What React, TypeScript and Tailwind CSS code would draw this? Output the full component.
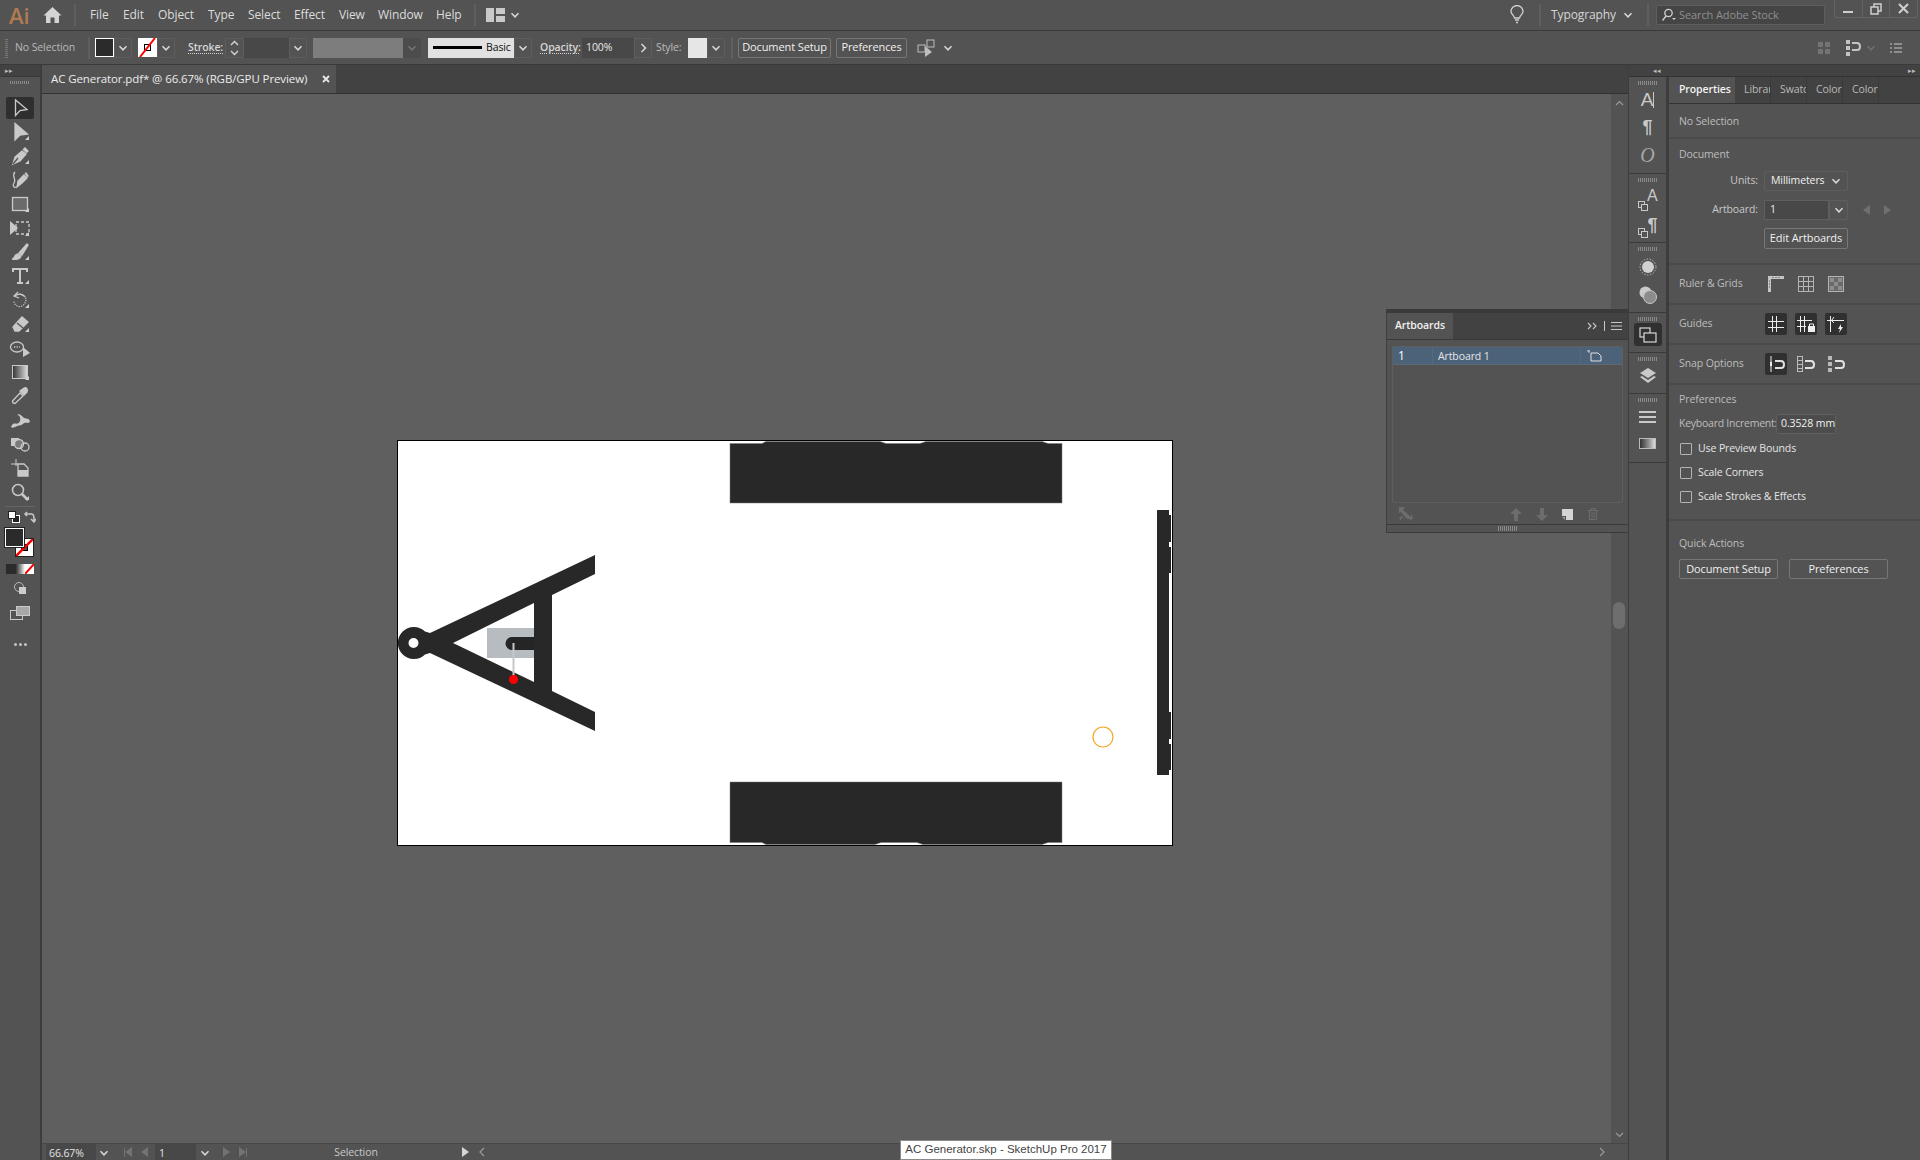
import React from "react";

const Chev = ({ c = "#d8d8d8", s = 10 }: { c?: string; s?: number }) => (
  <svg width={s} height={s} viewBox="0 0 10 10" fill="none"><path d="M1.5 3.2 5 6.8 8.5 3.2" stroke={c} strokeWidth="1.5" /></svg>
);

const Ico = ({ children, w = 20, h = 20, vb }: { children: React.ReactNode; w?: number; h?: number; vb?: string }) => (
  <svg width={w} height={h} viewBox={vb || `0 0 ${w} ${h}`} fill="none" stroke="#c9c9c9" strokeWidth="1.3">{children}</svg>
);

const Corner = () => (
  <svg className="absolute right-[5px] bottom-[3px]" width="4" height="4" viewBox="0 0 4 4"><path d="M4 0V4H0Z" fill="#cfcfcf" /></svg>
);

const tools: { icon: React.ReactNode; corner?: boolean; active?: boolean }[] = [
  { active: true, icon: <Ico><path d="M5.5 2V17.5L10 12.5 17 11.5Z" /></Ico> },
  { corner: true, icon: <Ico><path d="M5 1.5V18L10 13 17.5 12Z" fill="#c9c9c9" /></Ico> },
  { corner: true, icon: <Ico><path d="M3 18 5 11 12 5 16 8 10 15Z" fill="#c9c9c9" /><path d="M13 4 15 2 18 5 16 7" fill="#c9c9c9" /><path d="M3 18 8 12" stroke="#535353" /></Ico> },
  { icon: <Ico><path d="M7 17 8 11 14 5 17 8 12 13Z" fill="#c9c9c9" /><path d="M15 4 16 3 18 6 17 7" fill="#c9c9c9" /><path d="M5 2C1 6 7 9 4 13 2 16 4 18 7 17" /></Ico> },
  { corner: true, icon: <Ico><rect x="2.5" y="3.5" width="15" height="13" fill="#6b6b6b" /></Ico> },
  { corner: true, icon: <Ico w={22} vb="0 0 22 20"><rect x="7" y="4" width="13" height="12" strokeDasharray="3 2" /><path d="M1 3V17L9 10Z" fill="#c9c9c9" stroke="none" /></Ico> },
  { corner: true, icon: <Ico><path d="M9 11 17 2 18 3 12 13Z" fill="#c9c9c9" /><path d="M2 17C5 17 4 12 8 12L11 14C10 17 7 18 2 17Z" fill="#c9c9c9" /></Ico> },
  { corner: true, icon: <Ico><path d="M3 6V3H17V6M10 3V17M7 17H13" strokeWidth="2" /></Ico> },
  { corner: true, icon: <Ico><path d="M5 6C8 3 15 4 16 9 16 13 13 17 9 16.5 6 16 4 14 4 11" strokeDasharray="1.2 1.2" /><path d="M5 6C8 3 13 4 15 7" /><path d="M8 2 4 6 9 8" /></Ico> },
  { corner: true, icon: <Ico><path d="M3 13 12 3 18 8 9 17 5 17Z" fill="#c9c9c9" /><path d="M7 9 13 14" stroke="#535353" /></Ico> },
  { icon: <Ico w={22} vb="0 0 22 20"><ellipse cx="8" cy="9" rx="6.5" ry="5" /><path d="M14 9V19L21 15Z" fill="#c9c9c9" stroke="none" /><path d="M5 9H11" strokeDasharray="1.3 1.3" /></Ico> },
  { corner: true, icon: <svg width="16" height="14" viewBox="0 0 16 14"><defs><linearGradient id="gt"><stop offset="0" stopColor="#333" /><stop offset="1" stopColor="#ddd" /></linearGradient></defs><rect x="0.5" y="0.5" width="15" height="13" fill="url(#gt)" stroke="#c9c9c9" /></svg> },
  { icon: <Ico><path d="M3 17 2.5 15 10 7 13 10 5 17.5Z" /><path d="M10 5 14 2C17 1 18 4 17 6L14 9Z" fill="#c9c9c9" /></Ico> },
  { icon: <Ico w={22} vb="0 0 22 20"><path d="M2 17C5 10 8 17 11 11 12 7 10 5 8 5L10 4 13 6C16 10 19 7 21 11 20 15 17 11 14 14 12 16 9 15 6 17 4 18 3 18 2 17Z" fill="#c9c9c9" stroke="none" /></Ico> },
  { icon: <Ico w={22} vb="0 0 22 20"><rect x="2" y="4" width="8" height="8" fill="#c9c9c9" stroke="none" /><circle cx="10" cy="10" r="4.5" fill="#7a7a7a" /><circle cx="16" cy="13" r="4" /></Ico> },
  { icon: <Ico><path d="M1 6H8M6 1V8" strokeWidth="1" /><path d="M8 6H14L18 10V18H8Z" /><path d="M8 12H18V18H8Z" fill="#c9c9c9" stroke="none" /></Ico> },
  { corner: true, icon: <Ico><circle cx="8" cy="8" r="5.5" strokeWidth="1.5" /><path d="M12 12 18 18" strokeWidth="2.5" /></Ico> },
];

const Tools = () => (
  <aside className="w-[40px] flex flex-col bg-[#535353] shrink-0 items-center">
    <div className="w-full h-[12px] bg-[#424242] border-b border-[#3a3a3a] flex items-center pl-[5px]">
      <span className="text-[7px] leading-none text-[#bbb]">▸▸</span>
    </div>
    <div className="w-[20px] h-[3px] mt-[4px] mb-[12px] bg-[repeating-linear-gradient(90deg,#8a8a8a_0_1px,transparent_1px_2px)]" />
    {tools.map((t, i) => (
      <div key={i} className={`relative w-[28px] h-[22px] my-[1px] flex items-center justify-center rounded-[2px] ${t.active ? "bg-[#2f2f2f]" : ""}`}>
        {t.icon}
        {t.corner && <Corner />}
      </div>
    ))}
    <div className="w-[30px] h-px bg-[#656565] mt-[2px]" />
    <div className="w-[32px] flex justify-between items-center mt-[3px] h-[13px] pl-[4px]">
      <svg width="12" height="12" viewBox="0 0 12 12"><rect x="4.5" y="4.5" width="7" height="7" fill="#222" stroke="#fff" /><rect x="0.5" y="0.5" width="7" height="7" fill="#fff" stroke="#222" /></svg>
      <svg width="12" height="12" viewBox="0 0 12 12" fill="none" stroke="#c9c9c9" strokeWidth="1.5"><path d="M1 3H8C10 3 10 6 10 10M7 8 10 11 12 8M3 1 1 3 3 5" /></svg>
    </div>
    <div className="relative w-[30px] h-[29px] mt-[5px]">
      <div className="absolute left-[10px] top-[10px] w-[19px] h-[19px] border border-[#222] overflow-hidden bg-white">
        <div className="absolute inset-[5px] bg-[#555] border border-black" />
        <svg className="absolute inset-0" width="17" height="17" viewBox="0 0 17 17"><path d="M0 17 17 0" stroke="#f00" strokeWidth="2.5" /></svg>
      </div>
      <div className="absolute left-0 top-0 w-[19px] h-[19px] bg-[#2b2b2b] border border-white outline outline-[#222]" />
    </div>
    <div className="flex w-[28px] h-[10px] mt-[7px]">
      <div className="flex-1 bg-[#2b2b2b]" />
      <div className="flex-1 bg-gradient-to-r from-[#222] to-white" />
      <div className="flex-1 bg-white overflow-hidden"><svg width="9" height="10" viewBox="0 0 9 10"><path d="M0 10 9 0" stroke="#f00" strokeWidth="2" /></svg></div>
    </div>
    <div className="mt-[6px] h-[16px] flex items-center">
      <svg width="14" height="14" viewBox="0 0 14 14" fill="none"><circle cx="6" cy="6" r="4.5" stroke="#bbb" /><rect x="6" y="6" width="7" height="7" fill="#ccc" /></svg>
    </div>
    <div className="mt-[10px]">
      <svg width="20" height="14" viewBox="0 0 20 14" fill="none" stroke="#c9c9c9"><rect x="0.5" y="4.5" width="12" height="9" /><rect x="6.5" y="0.5" width="13" height="9" fill="#a8a8a8" /></svg>
    </div>
    <div className="mt-[23px] flex gap-[2px]">
      <span className="w-[3px] h-[3px] rounded-full bg-[#c4c4c4]" /><span className="w-[3px] h-[3px] rounded-full bg-[#c4c4c4]" /><span className="w-[3px] h-[3px] rounded-full bg-[#c4c4c4]" />
    </div>
  </aside>
);

const menus: [string, string][] = [["File", "w-[33px]"], ["Edit", "w-[35px]"], ["Object", "w-[50px]"], ["Type", "w-[40px]"], ["Select", "w-[46px]"], ["Effect", "w-[45px]"], ["View", "w-[39px]"], ["Window", "w-[58px]"], ["Help", "w-[37px]"]];

const VSep = ({ h = "h-[22px]", c = "bg-[#5f5f5f]" }: { h?: string; c?: string }) => <div className={`w-[2px] ${h} ${c} shrink-0`} />;

const MenuBar = () => (
  <header className="h-[31px] bg-[#535353] border-b border-[#3a3a3a] flex items-center shrink-0 text-[12px] text-[#dcdcdc]">
    <span className="ml-[9px] w-[34px] text-[22px] leading-none font-semibold text-[#b07b52]">Ai</span>
    <svg width="19" height="18" viewBox="0 0 19 18" fill="#d4d4d4"><path d="M9.5 1 0.5 9.5H3V17H7.5V11.5H11.5V17H16V9.5H18.5Z" /></svg>
    <div className="ml-[12px] mr-[14px]"><VSep /></div>
    {menus.map(([m, w]) => <span key={m} className={w}>{m}</span>)}
    <div className="ml-[1px]"><VSep /></div>
    <svg className="ml-[10px]" width="19" height="14" viewBox="0 0 19 14" fill="#c9c9c9"><rect width="8" height="14" /><rect x="10" width="9" height="6" /><rect x="10" y="8" width="9" height="6" /></svg>
    <span className="ml-[5px]"><Chev /></span>
    <svg className="ml-[990px]" width="14" height="20" viewBox="0 0 14 20" fill="none" stroke="#cfcfcf" strokeWidth="1.3"><path d="M4.5 13C4 10 1 9 1 6.5A6 6 0 0 1 13 6.5C13 9 10 10 9.5 13Z" /><path d="M5 15H9M6 17.5H8" /></svg>
    <div className="ml-[15px] mr-[10px]"><VSep /></div>
    <span className="w-[72px] text-[#d6d6d6]">Typography</span>
    <Chev />
    <div className="ml-[14px]"><VSep /></div>
    <div className="ml-[7px] w-[169px] h-[20px] bg-[#454545] border border-[#5e5e5e] rounded-[2px] flex items-center pl-[4px] text-[11px] text-[#8f8f8f]">
      <svg width="16" height="14" viewBox="0 0 16 14" fill="none" stroke="#d0d0d0" strokeWidth="1.3"><circle cx="7.5" cy="5" r="3.7" /><path d="M5 8 1.5 12.5" /><path d="M11 10H15L13 12Z" fill="#d0d0d0" stroke="none" /></svg>
      <span className="ml-[2px]">Search Adobe Stock</span>
    </div>
    <div className="ml-[9px] w-[84px] h-[18px] self-start border border-t-0 border-[#646464] rounded-b-[3px] flex">
      <div className="flex-1 flex items-end justify-center pb-[4px] border-r border-[#646464]"><div className="w-[10px] h-[2px] bg-[#cfcfcf]" /></div>
      <div className="flex-1 flex items-center justify-center border-r border-[#646464]"><svg width="12" height="12" viewBox="0 0 12 12" fill="none" stroke="#cfcfcf" strokeWidth="1.5"><rect x="4" y="1" width="7" height="7" /><rect x="1" y="4" width="7" height="7" fill="#535353" /></svg></div>
      <div className="flex-1 flex items-center justify-center"><svg width="11" height="11" viewBox="0 0 11 11" stroke="#cfcfcf" strokeWidth="2"><path d="M1 1 10 10M10 1 1 10" /></svg></div>
    </div>
  </header>
);

const Box = ({ w, children, cls = "" }: { w: string; children?: React.ReactNode; cls?: string }) => (
  <div className={`${w} h-[20px] shrink-0 flex items-center ${cls}`}>{children}</div>
);

const ChevBox = ({ w = "w-[18px]", c }: { w?: string; c?: string }) => (
  <div className={`${w} h-[20px] shrink-0 border border-[#5e5e5e] flex items-center justify-center rounded-r-[2px]`}><Chev c={c} /></div>
);

const Btn = ({ w, children, h = "h-[20px]" }: { w: string; children: React.ReactNode; h?: string }) => (
  <div className={`${w} ${h} shrink-0 border border-[#777] rounded-[2px] flex items-center justify-center text-[11px] text-[#f0f0f0]`}>{children}</div>
);

const ControlBar = () => (
  <div className="h-[34px] bg-[#535353] border-b border-[#3a3a3a] flex items-center shrink-0 text-[10.5px] text-[#cfcfcf]">
    <div className="ml-[5px] w-[3px] h-[20px] bg-[repeating-linear-gradient(0deg,#777_0_1px,transparent_1px_2px)]" />
    <span className="ml-[7px] w-[73px] text-[#b9b9b9]">No Selection</span>
    <VSep />
    <div className="ml-[5px] w-[19px] h-[19px] bg-[#2b2b2b] border border-white shrink-0" />
    <ChevBox />
    <div className="ml-[6px] w-[19px] h-[19px] bg-white relative shrink-0 overflow-hidden">
      <div className="absolute left-[6px] top-[6px] w-[7px] h-[7px] border border-black" />
      <svg className="absolute inset-0" width="19" height="19" viewBox="0 0 19 19"><path d="M2 19 17 0" stroke="#f00" strokeWidth="2" /></svg>
    </div>
    <ChevBox />
    <span className="ml-[13px] w-[37px] underline decoration-dotted underline-offset-2 font-semibold text-[#d6d6d6]">Stroke:</span>
    <div className="w-[19px] h-[20px] border border-[#5e5e5e] flex flex-col items-center justify-center shrink-0">
      <svg width="9" height="16" viewBox="0 0 9 16" fill="none" stroke="#d8d8d8" strokeWidth="1.3"><path d="M1 5 4.5 1.5 8 5M1 11 4.5 14.5 8 11" /></svg>
    </div>
    <div className="w-[45px] h-[20px] bg-[#484848] shrink-0" />
    <ChevBox />
    <div className="ml-[6px] w-[90px] h-[20px] bg-[#7d7d7d] shrink-0" />
    <div className="w-[18px] h-[20px] bg-[#4c4c4c] flex items-center justify-center shrink-0"><Chev c="#737373" /></div>
    <div className="ml-[7px] w-[86px] h-[20px] bg-[#e1e1e1] flex items-center shrink-0 text-[#111]">
      <div className="ml-[5px] w-[49px] h-[3px] bg-black" />
      <span className="ml-[4px]">Basic</span>
    </div>
    <ChevBox />
    <span className="ml-[8px] w-[42px] underline decoration-dotted underline-offset-2 font-semibold text-[#d6d6d6]">Opacity:</span>
    <Box w="w-[52px]" cls="bg-[#484848] pl-[4px] text-[#e8e8e8]">100%</Box>
    <div className="w-[18px] h-[20px] border border-[#5e5e5e] flex items-center justify-center shrink-0"><svg width="7" height="10" viewBox="0 0 7 10" fill="none" stroke="#d8d8d8" strokeWidth="1.5"><path d="M1.5 1 5.5 5 1.5 9" /></svg></div>
    <span className="ml-[4px] w-[32px] text-[#bdbdbd]">Style:</span>
    <div className="w-[19px] h-[20px] bg-[#e6e6e6] shrink-0" />
    <ChevBox />
    <div className="ml-[6px] mr-[5px]"><VSep /></div>
    <Btn w="w-[93px]">Document Setup</Btn>
    <div className="ml-[5px]"><Btn w="w-[71px]">Preferences</Btn></div>
    <svg className="ml-[10px]" width="20" height="20" viewBox="0 0 20 20" fill="none" stroke="#bdbdbd"><rect x="1" y="7" width="7" height="7" /><rect x="10" y="2" width="7" height="7" /><path d="M8 8V19L15 14Z" fill="#bdbdbd" stroke="none" /></svg>
    <span className="ml-[6px]"><Chev /></span>
    <svg className="ml-[865px]" width="12" height="12" viewBox="0 0 12 12" fill="#747474"><rect width="5" height="5" /><rect x="7" width="5" height="5" /><rect y="7" width="5" height="5" /><rect x="7" y="7" width="5" height="5" /></svg>
    <svg className="ml-[16px]" width="16" height="16" viewBox="0 0 16 16" fill="none"><rect x="0" y="0" width="4" height="4" fill="#c4c4c4" /><rect x="0" y="6" width="4" height="4" fill="#c4c4c4" /><rect x="0" y="12" width="4" height="4" fill="#c4c4c4" /><path d="M6 3H11C15 3 15 10 11 10H6" stroke="#c4c4c4" strokeWidth="2" /></svg>
    <span className="ml-[4px]"><Chev c="#707070" /></span>
    <svg className="ml-[14px]" width="12" height="10" viewBox="0 0 12 10" stroke="#c9c9c9" strokeWidth="1.2"><path d="M0 1H2M4 1H12M0 5H2M4 5H12M0 9H2M4 9H12" /></svg>
  </div>
);

const Artboard = () => (
  <div className="ml-[355px] mt-[346px] w-[776px] h-[406px] shrink-0">
    <svg width="776" height="406" viewBox="397 440 776 406">
      <rect x="397.5" y="440.5" width="775" height="405" fill="#fff" stroke="#000" />
      <g fill="#282828" stroke="#777" strokeWidth="0.5">
        <path d="M730 443.5H762L766 441.5H880L886 443.5H920L926 441.5H1042L1048 443.5H1062V503H730Z" />
        <path d="M730 842.5H762L766 844.5H875L881 842.5H917L923 844.5H1042L1048 842.5H1062V782H730Z" />
        <path d="M1157 510H1169V515H1171V542H1169V547H1171V573H1169V712H1171V739H1169V744H1171V770H1169V775H1157Z" stroke="none" />
      </g>
      <rect x="487" y="628" width="47" height="30" fill="#b7bcc0" />
      <path d="M512 637H534V650H512A6.5 6.5 0 0 1 512 637Z" fill="#252525" />
      <path fillRule="evenodd" fill="#282828" d="M595 555V574L552 595V691L595 712V731L430 653 425 654.5A16 16 0 1 1 425 631.5L430 633ZM453 643 534 682V603ZM413.5 638A5 5 0 1 0 413.5 648 5 5 0 1 0 413.5 638Z" />
      <rect x="512.5" y="643" width="2" height="35" fill="#c8c8c8" />
      <circle cx="513.5" cy="679.5" r="4.5" fill="#f00" />
      <circle cx="1103" cy="737" r="10" fill="none" stroke="#f2a61e" strokeWidth="1.2" />
    </svg>
  </div>
);

const VScroll = () => (
  <div className="w-[17px] bg-[#535353] flex flex-col items-center shrink-0 pr-[1px]">
    <svg className="mt-[6px]" width="9" height="6" viewBox="0 0 9 6" fill="none" stroke="#9a9a9a" strokeWidth="1.2"><path d="M1 5 4.5 1.5 8 5" /></svg>
    <div className="mt-[496px] w-[12px] h-[27px] rounded-[6px] bg-[#6e6e6e]" />
    <svg className="mt-[503px]" width="9" height="6" viewBox="0 0 9 6" fill="none" stroke="#9a9a9a" strokeWidth="1.2"><path d="M1 1 4.5 4.5 8 1" /></svg>
  </div>
);

const Tri = ({ d, c = "#737373" }: { d: "l" | "r"; c?: string }) => (
  <svg width="7" height="10" viewBox="0 0 7 10" fill={c}>{d === "l" ? <path d="M7 0V10L0 5Z" /> : <path d="M0 0V10L7 5Z" />}</svg>
);

const StatusBar = () => (
  <div className="h-[17px] bg-[#535353] border-t border-[#474747] flex items-center text-[10.5px] text-[#e4e4e4] shrink-0">
    <div className="ml-[4px] w-[50px] h-full bg-[#484848] pl-[3px] pt-[2px]">66.67%</div>
    <div className="w-[16px] flex justify-center pt-[2px]"><Chev /></div>
    <div className="ml-[12px] w-[24px] flex justify-between items-center"><span className="flex items-center"><span className="w-[1px] h-[9px] bg-[#737373]" /><Tri d="l" /></span><Tri d="l" /></div>
    <div className="ml-[7px] w-[41px] h-full bg-[#484848] pl-[4px] pt-[2px]">1</div>
    <div className="w-[17px] flex justify-center pt-[2px]"><Chev /></div>
    <div className="ml-[10px] w-[24px] flex justify-between items-center"><Tri d="r" /><span className="flex items-center"><Tri d="r" /><span className="w-[1px] h-[9px] bg-[#737373]" /></span></div>
    <div className="ml-[8px] w-[202px] text-center text-[#c9c9c9] pt-[2px]">Selection</div>
    <div className="w-[16px] flex justify-center"><Tri d="r" c="#d6d6d6" /></div>
    <svg className="ml-[6px]" width="6" height="10" viewBox="0 0 6 10" fill="none" stroke="#9a9a9a" strokeWidth="1.2"><path d="M5 1 1 5 5 9" /></svg>
    <svg className="ml-[1114px]" width="6" height="10" viewBox="0 0 6 10" fill="none" stroke="#9a9a9a" strokeWidth="1.2"><path d="M1 1 5 5 1 9" /></svg>
  </div>
);

const Center = () => (
  <main className="flex-1 flex flex-col min-w-0 border-l-2 border-[#3d3d3d]">
    <div className="h-[29px] bg-[#424242] border-b border-[#333] flex shrink-0">
      <div className="w-[294px] h-[28px] bg-[#535353] flex items-center pl-[9px] text-[11.5px] text-[#ececec] font-medium whitespace-nowrap">
        <span>AC Generator.pdf* @ 66.67% (RGB/GPU Preview)</span>
        <svg className="ml-[15px]" width="8" height="8" viewBox="0 0 8 8" stroke="#e8e8e8" strokeWidth="1.8"><path d="M1 1 7 7M7 1 1 7" /></svg>
      </div>
    </div>
    <div className="flex-1 flex min-h-0">
      <div className="flex-1 bg-[#5f5f5f] overflow-hidden"><Artboard /></div>
      <VScroll />
    </div>
    <StatusBar />
  </main>
);

const Grip = () => <div className="w-[20px] h-[4px] bg-[repeating-linear-gradient(90deg,#8a8a8a_0_1px,transparent_1px_2px)] mx-auto" />;

const DockGroup = ({ h, children }: { h: string; children: React.ReactNode }) => (
  <div className={`${h} border-b border-[#3a3a3a] flex flex-col items-center pt-[4px] shrink-0`}>
    <Grip />{children}
  </div>
);

const MiniBoxes = () => (
  <svg className="absolute left-0 bottom-[2px]" width="10" height="10" viewBox="0 0 10 10" fill="none" stroke="#c9c9c9"><rect x="0.5" y="0.5" width="6" height="6" /><rect x="3.5" y="3.5" width="6" height="6" fill="#535353" /></svg>
);

const Dock = () => (
  <div className="w-[40px] shrink-0 border-r-[3px] border-[#3d3d3d] flex flex-col text-[#c9c9c9]">
    <DockGroup h="h-[97px]">
      <div className="mt-[2px] h-[26px] flex items-center font-['Liberation_Sans',sans-serif] text-[19px]"><span>A</span><span className="w-px h-[16px] bg-[#c9c9c9]" /></div>
      <div className="h-[28px] flex items-center font-['Liberation_Sans',sans-serif] text-[18px] font-bold">¶</div>
      <div className="h-[27px] flex items-center font-['Liberation_Serif',serif] italic text-[20px] text-[#a8a8a8]">O</div>
    </DockGroup>
    <DockGroup h="h-[69px]">
      <div className="mt-[5px] relative w-[20px] h-[26px]">
        <span className="absolute right-0 top-[1px] text-[16px] leading-none font-['Liberation_Sans',sans-serif]">A</span>
        <MiniBoxes />
      </div>
      <div className="mt-[3px] relative w-[20px] h-[24px]">
        <span className="absolute right-0 top-0 text-[18px] leading-none font-bold font-['Liberation_Sans',sans-serif]">¶</span>
        <MiniBoxes />
      </div>
    </DockGroup>
    <DockGroup h="h-[70px]">
      <svg className="mt-[7px]" width="18" height="18" viewBox="0 0 18 18"><circle cx="9" cy="9" r="8" fill="none" stroke="#bbb" strokeDasharray="1.5 1.5" /><circle cx="9" cy="9" r="6" fill="#d0d0d0" /></svg>
      <svg className="mt-[10px]" width="18" height="18" viewBox="0 0 18 18"><circle cx="6.5" cy="6.5" r="6" fill="#c9c9c9" /><circle cx="11" cy="11" r="6.5" fill="#8c8c8c" stroke="#c9c9c9" /></svg>
    </DockGroup>
    <DockGroup h="h-[40px]">
      <div className="mt-[2px] w-[28px] h-[23px] bg-[#303030] rounded-[3px] flex items-center justify-center">
        <svg width="18" height="16" viewBox="0 0 18 16" fill="none" stroke="#d8d8d8" strokeWidth="1.2"><rect x="1" y="1" width="10" height="9" /><rect x="5" y="6" width="12" height="9" fill="#303030" /></svg>
      </div>
    </DockGroup>
    <DockGroup h="h-[41px]">
      <svg className="mt-[7px]" width="18" height="18" viewBox="0 0 18 18" fill="#c9c9c9"><path d="M9 0 17 5 9 10 1 5Z" /><path d="M1 9 3 8 9 12 15 8 17 9 9 15Z" /></svg>
    </DockGroup>
    <DockGroup h="h-[69px]">
      <div className="mt-[9px] w-[17px] flex flex-col gap-[3px]"><div className="h-[2px] bg-[#c9c9c9]" /><div className="h-[2px] bg-[#c9c9c9]" /><div className="h-[2px] bg-[#c9c9c9]" /></div>
      <div className="mt-[15px] w-[17px] h-[11px] bg-gradient-to-r from-[#333] to-[#ddd] border border-[#bbb]" />
    </DockGroup>
    <div className="flex-1" />
  </div>
);

const Sec = ({ h, children, last }: { h: string; children: React.ReactNode; last?: boolean }) => (
  <section className={`${h} shrink-0 ${last ? "" : "border-b-2 border-[#4b4b4b]"} pl-[10px] relative`}>{children}</section>
);

const Label = ({ children, cls = "" }: { children: React.ReactNode; cls?: string }) => <div className={`text-[#bdbdbd] ${cls}`}>{children}</div>;

const IconRow = ({ label, children }: { label: string; children: React.ReactNode }) => (
  <div className="h-full flex items-center"><span className="w-[86px] text-[#bdbdbd]">{label}</span><div className="flex gap-[8px]">{children}</div></div>
);

const IBtn = ({ on, children }: { on?: boolean; children: React.ReactNode }) => (
  <div className={`w-[22px] h-[22px] rounded-[2px] flex items-center justify-center ${on ? "bg-[#303030]" : ""}`}>{children}</div>
);

const Check = ({ label }: { label: string }) => (
  <div className="flex items-center h-[24px] text-[#e4e4e4]"><span className="w-[12px] h-[12px] border border-[#b4b4b4] rounded-[1px] mr-[6px]" />{label}</div>
);

const SnapMag = ({ x = 8 }: { x?: number }) => <path d={`M${x} 6H${x + 6}C${x + 10} 6 ${x + 10} 13 ${x + 6} 13H${x}`} stroke="#e0e0e0" strokeWidth="2" fill="none" />;

const Panel = () => (
  <div className="flex-1 flex flex-col min-w-0 text-[10.5px]">
    <div className="h-[27px] bg-[#424242] border-b border-[#333] flex items-stretch text-[#b9b9b9] shrink-0">
      <div className="w-[66px] bg-[#535353] flex items-center pl-[10px] text-[#f2f2f2] font-semibold">Properties</div>
      {["Librar", "Swatc", "Color", "Color"].map((t, i) => (
        <div key={i} className="w-[36px] border-r border-[#3a3a3a] flex items-center pl-[9px] overflow-hidden whitespace-nowrap">{t}</div>
      ))}
    </div>
    <Sec h="h-[35px]"><Label cls="pt-[10px]">No Selection</Label></Sec>
    <Sec h="h-[126px]">
      <Label cls="pt-[8px]">Document</Label>
      <div className="mt-[8px] flex items-center h-[20px]">
        <span className="w-[85px] text-right pr-[6px] text-[#c8c8c8]">Units:</span>
        <div className="w-[84px] h-[20px] border border-[#5f5f5f] rounded-[2px] flex items-center justify-between px-[6px] text-[#f0f0f0] font-medium">Millimeters<Chev /></div>
      </div>
      <div className="mt-[9px] flex items-center h-[20px]">
        <span className="w-[85px] text-right pr-[6px] text-[#c8c8c8]">Artboard:</span>
        <div className="w-[65px] h-[20px] bg-[#484848] border border-[#5f5f5f] pl-[5px] flex items-center text-[#f0f0f0]">1</div>
        <ChevBox w="w-[19px]" />
        <span className="ml-[15px]"><Tri d="l" c="#6f6f6f" /></span>
        <span className="ml-[14px]"><Tri d="r" c="#6f6f6f" /></span>
      </div>
      <div className="mt-[8px] ml-[85px]"><Btn w="w-[84px]" h="h-[21px]">Edit Artboards</Btn></div>
    </Sec>
    <Sec h="h-[40px]">
      <IconRow label="Ruler & Grids">
        <IBtn><svg width="16" height="16" viewBox="0 0 16 16" fill="#c4c4c4"><path d="M0 0H16V3H3V16H0Z" /><path d="M5 1V2M8 1V2M11 1V2M1 5H2M1 8H2M1 11H2" stroke="#535353" /></svg></IBtn>
        <IBtn><svg width="16" height="16" viewBox="0 0 16 16" fill="none" stroke="#b4b4b4"><rect x="0.5" y="0.5" width="15" height="15" /><path d="M5.5 0V16M10.5 0V16M0 5.5H16M0 10.5H16" /></svg></IBtn>
        <IBtn><svg width="16" height="16" viewBox="0 0 16 16"><rect x="0.5" y="0.5" width="15" height="15" fill="#6a6a6a" stroke="#b4b4b4" /><path d="M2 2H6V6H2ZM10 2H14V6H10ZM6 6H10V10H6ZM2 10H6V14H2ZM10 10H14V14H10Z" fill="#8d8d8d" /></svg></IBtn>
      </IconRow>
    </Sec>
    <Sec h="h-[40px]">
      <IconRow label="Guides">
        <IBtn on><svg width="16" height="16" viewBox="0 0 16 16" stroke="#eee"><path d="M4.5 0V16M8.5 0V16M0 5.5H16M0 11.5H16" /></svg></IBtn>
        <IBtn on><svg width="18" height="18" viewBox="0 0 18 18"><path d="M3.5 1V17M7.5 1V17M0 5.5H15M0 11.5H9" stroke="#eee" /><rect x="11" y="11" width="7" height="6" fill="#eee" /><path d="M12.5 11V9H16.5V11" stroke="#eee" fill="none" /></svg></IBtn>
        <IBtn on><svg width="18" height="18" viewBox="0 0 18 18"><path d="M3.5 1V17M0 5.5H17M7 2 4.5 5.5 7 8" stroke="#eee" fill="none" /><path d="M14 9 11 14H13L12 18 16 12H14Z" fill="#eee" /></svg></IBtn>
      </IconRow>
    </Sec>
    <Sec h="h-[40px]">
      <IconRow label="Snap Options">
        <IBtn on><svg width="18" height="18" viewBox="0 0 18 18"><path d="M4 1V17" stroke="#eee" /><rect x="3" y="7" width="2" height="4" fill="#eee" /><SnapMag /></svg></IBtn>
        <IBtn><svg width="18" height="18" viewBox="0 0 18 18"><rect x="0.5" y="1.5" width="5" height="15" fill="none" stroke="#bbb" /><path d="M0 5.5H6M0 9.5H6M0 13.5H6" stroke="#bbb" /><SnapMag /></svg></IBtn>
        <IBtn><svg width="18" height="18" viewBox="0 0 18 18" fill="#bbb"><rect x="1" y="1" width="4" height="4" /><rect x="1" y="7" width="4" height="4" /><rect x="1" y="13" width="4" height="4" /><SnapMag /></svg></IBtn>
      </IconRow>
    </Sec>
    <Sec h="h-[136px]">
      <Label cls="pt-[7px]">Preferences</Label>
      <div className="flex items-center h-[20px] mt-[6px] whitespace-nowrap">
        <span className="w-[97px] shrink-0 text-[#bdbdbd] tracking-[-0.25px]">Keyboard Increment:</span>
        <div className="w-[60px] h-[20px] shrink-0 border border-[#5f5f5f] bg-[#4c4c4c] rounded-[2px] pl-[4px] flex items-center text-[#f0f0f0]">0.3528 mm</div>
      </div>
      <div className="mt-[3px] pl-px"><Check label="Use Preview Bounds" /><Check label="Scale Corners" /><Check label="Scale Strokes & Effects" /></div>
    </Sec>
    <Sec h="h-[80px]" last>
      <Label cls="pt-[15px]">Quick Actions</Label>
      <div className="mt-[7px] flex gap-[11px]"><Btn w="w-[99px]">Document Setup</Btn><Btn w="w-[99px]">Preferences</Btn></div>
    </Sec>
  </div>
);

const RightSide = () => (
  <div className="w-[292px] shrink-0 flex flex-col border-l border-[#3d3d3d]">
    <div className="h-[12px] bg-[#424242] border-b border-[#333] flex items-center justify-between pl-[24px] pr-[4px] shrink-0 text-[7px] leading-none text-[#bbb]">
      <span>◂◂</span><span>▸▸</span>
    </div>
    <div className="flex-1 flex min-h-0">
      <Dock />
      <Panel />
    </div>
  </div>
);

const ArtboardsPanel = () => (
  <div className="absolute left-[1386px] top-[309px] w-[242px] h-[224px] bg-[#535353] border-t-[4px] border-[#3a3a3a] border-l border-l-[#3f3f3f] flex flex-col text-[10.5px]">
    <div className="h-[27px] bg-[#424242] flex items-stretch shrink-0 border-b border-[#3a3a3a]">
      <div className="w-[66px] bg-[#535353] flex items-center justify-center font-semibold text-[#f0f0f0]">Artboards</div>
      <div className="flex-1 flex items-center justify-end gap-[6px] pr-[6px]">
        <svg className="mr-[1px]" width="10" height="8" viewBox="0 0 10 8" fill="none" stroke="#c9c9c9" strokeWidth="1.1"><path d="M1 1 4 4 1 7M6 1 9 4 6 7" /></svg>
        <span className="w-px h-[10px] bg-[#c9c9c9]" />
        <svg width="11" height="8" viewBox="0 0 11 8" stroke="#c9c9c9"><path d="M0 .5H11M0 4H11M0 7.5H11" /></svg>
      </div>
    </div>
    <div className="mx-[5px] mt-[6px] h-[158px] border border-[#5f5f5f] rounded-[2px]">
      <div className="h-[18px] bg-[#4b6279] flex items-center text-[#f0f0f0] border-b border-[#5d6a75]">
        <span className="w-[40px] pl-[5px] text-[12px] text-white border-r border-[#566a7e] leading-[18px]">1</span>
        <span className="flex-1 pl-[5px] text-[#e6e6e6] border-r border-[#566a7e] leading-[18px]">Artboard 1</span>
        <span className="w-[41px] pl-[6px] flex"><svg width="16" height="12" viewBox="0 0 16 12" fill="none" stroke="#e0e0e0"><path d="M0 1H3M2 0V3" strokeWidth="0.8" /><path d="M4 3H11L14 6V11H4Z" /></svg></span>
      </div>
    </div>
    <div className="flex items-center h-[20px] pl-[12px] mt-[1px] shrink-0">
      <svg width="14" height="14" viewBox="0 0 14 14" fill="#6d6d6d"><path d="M0 0H6L4 3 12 10V7L14 11 11 14V12H8L2 5 0 6ZM0 11 3 9 5 11H2V14Z" /></svg>
      <svg className="ml-[97px]" width="12" height="13" viewBox="0 0 12 13" fill="#6d6d6d"><path d="M6 0 12 6H8V13H4V6H0Z" /></svg>
      <svg className="ml-[14px]" width="12" height="13" viewBox="0 0 12 13" fill="#6d6d6d"><path d="M6 13 12 7H8V0H4V7H0Z" /></svg>
      <svg className="ml-[14px]" width="11" height="11" viewBox="0 0 11 11" fill="#d4d4d4"><path d="M0 0H11V11H4V7H0Z" /><path d="M0 8H3V11Z" fill="#999" /></svg>
      <svg className="ml-[15px]" width="10" height="12" viewBox="0 0 10 12" fill="none" stroke="#6d6d6d"><path d="M0 2.5H10M3 2V.5H7V2M1.5 3V11.5H8.5V3M4 4V10M6 4V10" /></svg>
    </div>
    <div className="h-[9px] mt-auto border-y border-[#3a3a3a] bg-[#535353] flex items-center justify-center"><div className="w-[20px] h-[5px] bg-[repeating-linear-gradient(90deg,#8a8a8a_0_1px,transparent_1px_2px)]" /></div>
  </div>
);

export default function App() {
  return (
    <div className="relative w-[1920px] h-[1160px] overflow-hidden flex flex-col bg-[#535353] font-['Open_Sans','Noto_Sans',sans-serif] tracking-[-0.1px]">
      <MenuBar />
      <ControlBar />
      <div className="flex-1 flex min-h-0">
        <Tools />
        <Center />
        <RightSide />
      </div>
      <ArtboardsPanel />
      <div className="absolute left-[900px] top-[1140px] w-[212px] h-[20px] bg-white border border-[#8a8a8a] flex items-center justify-center text-[11.5px] text-[#444] font-['Liberation_Sans',sans-serif] tracking-normal whitespace-nowrap">AC Generator.skp - SketchUp Pro 2017</div>
    </div>
  );
}
